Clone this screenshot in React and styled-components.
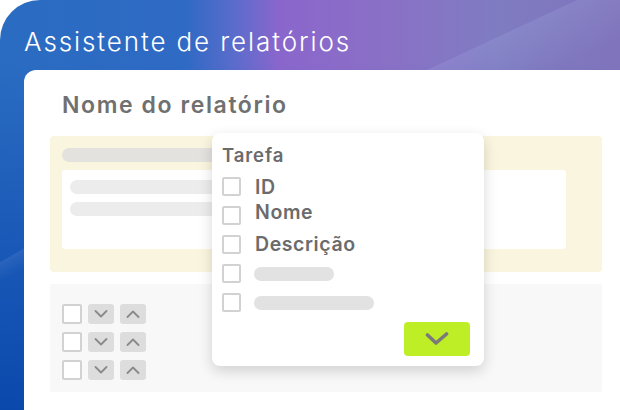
import React from "react";
import styled, { createGlobalStyle } from "styled-components";

const Global = createGlobalStyle`
  html, body { margin: 0; padding: 0; background: #ffffff; }
  body { font-family: Inter, "Noto Sans", sans-serif; }
  * { box-sizing: border-box; }
`;

const Frame = styled.div`
  position: relative;
  width: 620px;
  height: 410px;
  overflow: hidden;
  border-top-left-radius: 40px;
  padding: 24px 0 0 24px;
  display: flex;
  flex-direction: column;
  gap: 10px;
  background:
    linear-gradient(155deg, transparent 50%, rgba(190, 215, 255, 0.12) 50.6%, transparent 80%) right top / 260px 80px no-repeat,
    linear-gradient(150deg, transparent 55%, rgba(190, 215, 255, 0.10) 56%, transparent 75%) left 205px / 40px 80px no-repeat,
    linear-gradient(180deg, rgba(0, 0, 0, 0) 15%, rgba(0, 60, 165, 0.75) 100%),
    linear-gradient(90deg, #2a6cc2 0%, #2f6ac4 30%, #5c6ccc 38%, #8a66cc 45%, #8a70c6 62%, #7f7cc2 80%, #8074bc 100%);
`;

const Title = styled.h1`
  margin: 0;
  height: 36px;
  line-height: 36px;
  font-size: 26px;
  font-weight: 300;
  color: #ffffff;
  letter-spacing: 1.9px;
  white-space: nowrap;
`;

const Card = styled.div`
  flex: 1;
  background: #ffffff;
  border-top-left-radius: 12px;
  padding: 20px 18px 0 26px;
  display: flex;
  flex-direction: column;
`;

const Heading = styled.h2`
  margin: 0 0 16px 12px;
  height: 30px;
  line-height: 30px;
  font-size: 23px;
  font-weight: 600;
  color: #707070;
  letter-spacing: 1.6px;
  white-space: nowrap;
`;

const YellowPanel = styled.div`
  height: 136px;
  background: #faf5de;
  border-radius: 4px;
  padding: 12px 12px;
  display: flex;
  flex-direction: column;
  gap: 8px;
`;

const Bar = styled.div`
  height: 14px;
  width: ${(p) => p.$w}px;
  border-radius: 7px;
  background: ${(p) => p.$c || "#e4e2df"};
  flex-shrink: 0;
`;

const InnerBox = styled.div`
  height: 79px;
  margin-right: 24px;
  background: #ffffff;
  border-radius: 3px;
  padding: 10px 8px;
  display: flex;
  flex-direction: column;
  gap: 8px;
`;

const GreyPanel = styled.div`
  margin-top: 12px;
  height: 108px;
  background: #f8f8f8;
  border-radius: 2px;
  padding: 20px 12px;
  display: flex;
  flex-direction: column;
  gap: 8px;
`;

const ControlRow = styled.div`
  display: flex;
  align-items: center;
  gap: 6px;
`;

const Box = styled.div`
  width: ${(p) => p.$s}px;
  height: ${(p) => p.$s}px;
  border: 2px solid #d2d2d2;
  border-radius: 2px;
  background: #ffffff;
  flex-shrink: 0;
`;

const ArrowButton = styled.div`
  width: 26px;
  height: 20px;
  border-radius: 3px;
  background: #dddddd;
  display: flex;
  align-items: center;
  justify-content: center;
`;

const Popup = styled.div`
  position: absolute;
  left: 212px;
  top: 133px;
  width: 272px;
  height: 233px;
  background: #ffffff;
  border-radius: 8px;
  box-shadow: 0 5px 14px rgba(0, 0, 0, 0.16);
  padding: 11px 14px 10px 10px;
  display: flex;
  flex-direction: column;
`;

const PopupTitle = styled.div`
  height: 22px;
  line-height: 22px;
  font-size: 18.5px;
  font-weight: 600;
  color: #6b6b6b;
  letter-spacing: 0.9px;
  margin-bottom: 11px;
`;

const Option = styled.div`
  height: 30px;
  display: flex;
  align-items: flex-start;
  gap: 14px;
`;

const Label = styled.span`
  font-size: 19.5px;
  font-weight: 600;
  color: #6b6b6b;
  line-height: 19px;
  letter-spacing: 0.6px;
  margin-top: ${(p) => p.$dy || 0}px;
`;

const Placeholder = styled.div`
  height: 14px;
  width: ${(p) => p.$w}px;
  border-radius: 7px;
  background: #e2e2e2;
  margin-top: 3px;
  margin-left: -1px;
`;

const Footer = styled.div`
  margin-top: auto;
  display: flex;
  justify-content: flex-end;
`;

const ConfirmButton = styled.div`
  width: 66px;
  height: 34px;
  border-radius: 4px;
  background: #bdee26;
  display: flex;
  align-items: center;
  justify-content: center;
`;

const Chevron = ({ up }) => (
  <svg width="14" height="8" viewBox="0 0 14 8">
    <path
      d={up ? "M1.5 7 L7 1.5 L12.5 7" : "M1.5 1 L7 6.5 L12.5 1"}
      fill="none"
      stroke="#8a8a8a"
      strokeWidth="1.8"
      strokeLinecap="round"
      strokeLinejoin="round"
    />
  </svg>
);

const Check = () => (
  <svg width="24" height="14" viewBox="0 0 24 14">
    <path
      d="M2.5 3 L11 11 L21.5 2"
      fill="none"
      stroke="#7a7a7a"
      strokeWidth="3.6"
      strokeLinecap="round"
      strokeLinejoin="round"
    />
  </svg>
);

const options = [
  { label: "ID", dy: 1 },
  { label: "Nome", dy: -3 },
  { label: "Descrição", dy: 0 },
  { ph: 80 },
  { ph: 120 },
];

export default function App() {
  return (
    <>
      <Global />
      <Frame>
        <Title>Assistente de relatórios</Title>
        <Card>
          <Heading>Nome do relatório</Heading>
          <YellowPanel>
            <Bar $w={320} />
            <InnerBox>
              <Bar $w={300} $c="#ececec" />
              <Bar $w={300} $c="#ececec" />
            </InnerBox>
          </YellowPanel>
          <GreyPanel>
            {[0, 1, 2].map((i) => (
              <ControlRow key={i}>
                <Box $s={20} />
                <ArrowButton>
                  <Chevron />
                </ArrowButton>
                <ArrowButton>
                  <Chevron up />
                </ArrowButton>
              </ControlRow>
            ))}
          </GreyPanel>
        </Card>
        <Popup>
          <PopupTitle>Tarefa</PopupTitle>
          {options.map((o, i) => (
            <Option key={i}>
              <Box $s={19} />
              {o.label ? <Label $dy={o.dy}>{o.label}</Label> : <Placeholder $w={o.ph} />}
            </Option>
          ))}
          <Footer>
            <ConfirmButton>
              <Check />
            </ConfirmButton>
          </Footer>
        </Popup>
      </Frame>
    </>
  );
}
